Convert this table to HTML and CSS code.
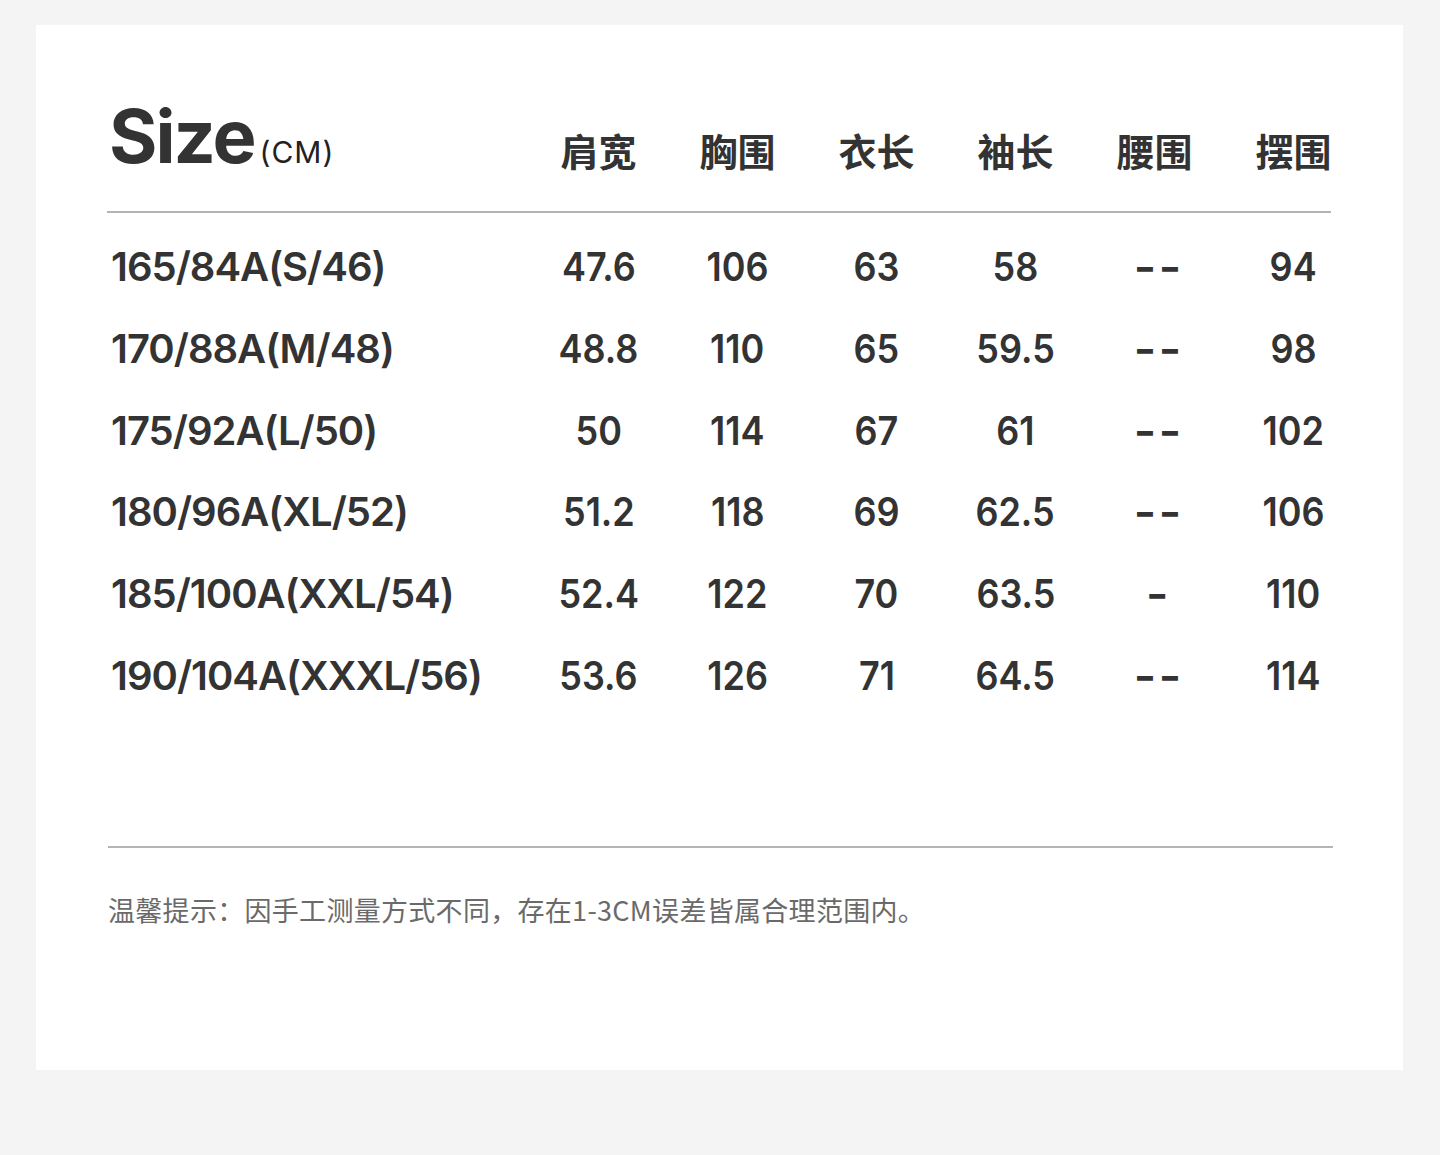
FILE: index.html
```html
<!DOCTYPE html>
<html lang="zh-CN">
<head>
<meta charset="utf-8">
<title>Size</title>
<link rel="stylesheet" href="styles.css">
</head>
<body>
<div class="card">
  <div class="grid head">
    <div class="title"><span class="size">Size</span><span class="unit">(CM)</span></div>
    <div class="th">肩宽</div>
    <div class="th">胸围</div>
    <div class="th">衣长</div>
    <div class="th">袖长</div>
    <div class="th">腰围</div>
    <div class="th">摆围</div>
  </div>
  <div class="rule top-rule"></div>
  <div class="body">
    <div class="grid row"><div class="lbl">165/84A(S/46)</div><div class="v"><span>47.6</span></div><div class="v"><span>106</span></div><div class="v"><span>63</span></div><div class="v"><span>58</span></div><div class="v"><span class="dash">--</span></div><div class="v"><span>94</span></div></div>
    <div class="grid row"><div class="lbl">170/88A(M/48)</div><div class="v"><span>48.8</span></div><div class="v"><span>110</span></div><div class="v"><span>65</span></div><div class="v"><span>59.5</span></div><div class="v"><span class="dash">--</span></div><div class="v"><span>98</span></div></div>
    <div class="grid row"><div class="lbl">175/92A(L/50)</div><div class="v"><span>50</span></div><div class="v"><span>114</span></div><div class="v"><span>67</span></div><div class="v"><span>61</span></div><div class="v"><span class="dash">--</span></div><div class="v"><span>102</span></div></div>
    <div class="grid row"><div class="lbl">180/96A(XL/52)</div><div class="v"><span>51.2</span></div><div class="v"><span>118</span></div><div class="v"><span>69</span></div><div class="v"><span>62.5</span></div><div class="v"><span class="dash">--</span></div><div class="v"><span>106</span></div></div>
    <div class="grid row"><div class="lbl">185/100A(XXL/54)</div><div class="v"><span>52.4</span></div><div class="v"><span>122</span></div><div class="v"><span>70</span></div><div class="v"><span>63.5</span></div><div class="v"><span class="dash">-</span></div><div class="v"><span>110</span></div></div>
    <div class="grid row"><div class="lbl">190/104A(XXXL/56)</div><div class="v"><span>53.6</span></div><div class="v"><span>126</span></div><div class="v"><span>71</span></div><div class="v"><span>64.5</span></div><div class="v"><span class="dash">--</span></div><div class="v"><span>114</span></div></div>
  </div>
  <div class="rule bottom-rule"></div>
  <p class="note">温馨提示：因手工测量方式不同，存在1-3CM误差皆属合理范围内。</p>
</div>
</body>
</html>
```
FILE: styles.css
```css
html, body {
  margin: 0;
  padding: 0;
}
body {
  background: #f4f4f4;
  font-family: Inter, "Noto Sans CJK SC", sans-serif;
  color: #333333;
  padding: 25px 0 0 36px;
  height: 1155px;
  box-sizing: border-box;
}
.card {
  background: #ffffff;
  width: 1367px;
  height: 1045px;
  box-sizing: border-box;
  padding: 87px 0 0 75px;
}
.grid {
  display: grid;
  grid-template-columns: 418px repeat(6, 139px);
  align-items: center;
}
.head {
  height: 80px;
}
.title {
  align-self: start;
  margin-top: -13px;
  margin-left: -2px;
  display: flex;
  align-items: baseline;
  white-space: nowrap;
}
.size {
  font-size: 74px;
  line-height: 74px;
  font-weight: 700;
  letter-spacing: -2px;
  color: #333333;
}
.unit {
  font-size: 30px;
  font-weight: 400;
  margin-left: 5px;
  letter-spacing: 1px;
  color: #222222;
}
.th {
  text-align: center;
  font-family: "Noto Sans CJK SC", sans-serif;
  font-weight: 700;
  font-size: 38px;
  line-height: 80px;
  margin-top: -5px;
  color: #333333;
}
.rule {
  height: 2px;
  background: #b4b4b4;
}
.top-rule {
  width: 1224px;
  margin: 19px 0 0 -4px;
}
.body {
  margin-top: 14px;
}
.row {
  height: 81.7px;
}
.lbl {
  font-size: 40px;
  font-weight: 600;
  letter-spacing: -1px;
  white-space: nowrap;
  margin-top: -2px;
}
.v {
  text-align: center;
  font-size: 40px;
  font-weight: 600;
  margin-top: -2px;
}
.v span {
  display: inline-block;
  transform: scaleX(0.9);
}
.v .dash {
  font-weight: 700;
  letter-spacing: 2px;
  margin-right: -2px;
  margin-left: 6px;
  transform: scaleX(1.2);
}
.bottom-rule {
  width: 1225px;
  margin: 129px 0 0 -3px;
}
.note {
  margin: 44px 0 0 -3px;
  font-family: "Noto Sans CJK SC", sans-serif;
  font-weight: 400;
  font-size: 27px;
  line-height: 36px;
  letter-spacing: 0.3px;
  color: #6a6a6a;
}
```
